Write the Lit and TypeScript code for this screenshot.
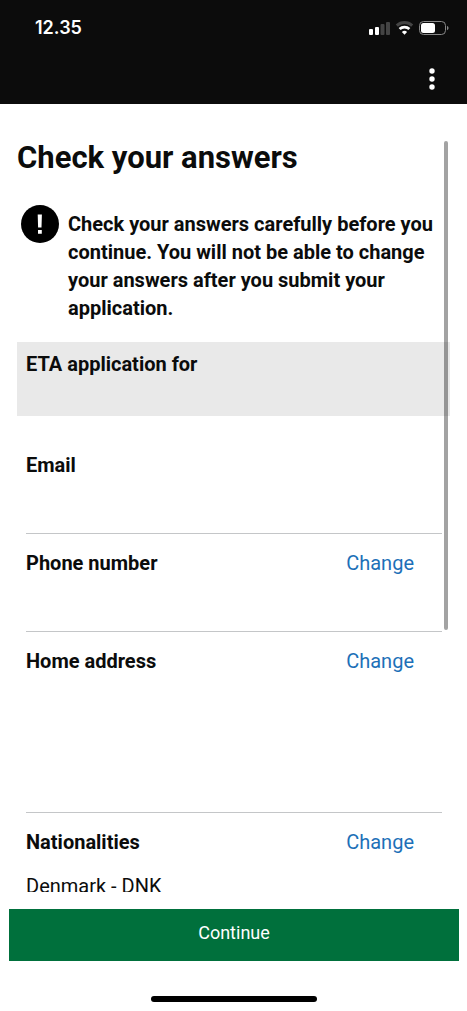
import { LitElement, html, css, svg, nothing } from "lit";
import { customElement, property } from "lit/decorators.js";

interface Answer {
  label: string;
  lines: string[];
  blank?: "line" | "block";
  change?: boolean;
}

const ANSWERS: Answer[] = [
  { label: "Email", lines: [], blank: "line" },
  { label: "Phone number", lines: [], blank: "line", change: true },
  { label: "Home address", lines: [], blank: "block", change: true },
  { label: "Nationalities", lines: ["Denmark - DNK"], change: true },
];

@customElement("status-bar")
export class StatusBar extends LitElement {
  static styles = css`
    :host {
      display: flex;
      align-items: center;
      justify-content: space-between;
      height: 56px;
      padding: 0 18px 0 35px;
      color: #fff;
      font: 600 18px/24px Inter, sans-serif;
    }
    .icons {
      display: block;
    }
  `;

  render() {
    return html`
      <time>12.35</time>
      <svg class="icons" width="80" height="16" viewBox="0 0 80 16" aria-hidden="true">
        <rect x="0" y="9" width="4" height="6" rx="1" fill="#fff" />
        <rect x="6" y="7" width="4" height="8" rx="1" fill="#fff" />
        <rect x="11.500" y="4" width="4" height="11" rx="1" fill="#444" />
        <rect x="17" y="2" width="4" height="13" rx="1" fill="#444" />
        ${svg`
          <path d="M27.8 5.6a11.2 11.2 0 0 1 15.4 0" fill="none" stroke="#444" stroke-width="3" />
          <path d="M30.6 9a7.2 7.2 0 0 1 9.800 0" fill="none" stroke="#fff" stroke-width="2.8" />
          <path d="M35.5 14.8 32.9 12.1a3.7 3.7 0 0 1 5.2 0z" fill="#fff" />
        `}
        <rect x="50.5" y="1.5" width="26" height="13" rx="4" fill="none" stroke="#888" />
        <rect x="52" y="3" width="14" height="10" rx="2.5" fill="#fff" />
        <path d="M78 6c2 .7 2 3.5 0 4.2z" fill="#888" />
      </svg>
    `;
  }
}

@customElement("answer-row")
export class AnswerRow extends LitElement {
  @property({ attribute: false }) answer!: Answer;

  static styles = css`
    :host {
      display: block;
      padding: 15px 28px 10px 0;
      border-bottom: 1px solid #c4c6c8;
    }
    .head {
      display: flex;
      justify-content: space-between;
      margin-bottom: 16px;
    }
    .label {
      margin: 0;
      font: inherit;
      font-weight: 700;
    }
    .link {
      color: #1d70b8;
      text-decoration: none;
    }
    .value {
      margin: 0;
      min-height: 28px;
    }
    .block {
      min-height: 111px;
    }
  `;

  render() {
    const { label, lines, blank, change } = this.answer;
    return html`
      <div class="head">
        <h2 class="label">${label}</h2>
        ${change ? html`<a class="link" href="#" aria-label="Change ${label}">Change</a>` : nothing}
      </div>
      <p class="value ${blank ?? ""}">${lines.join(", ")}</p>
    `;
  }
}

@customElement("app-root")
export class AppRoot extends LitElement {
  static styles = css`
    :host {
      display: flex;
      flex-direction: column;
      height: 100vh;
      background: #fff;
      color: #0b0c0c;
      font: 400 20px/28px Roboto, sans-serif;
    }
    .top {
      background: #0c0c0c;
    }
    .bar {
      display: flex;
      justify-content: flex-end;
      height: 48px;
      padding-right: 15px;
    }
    .more {
      width: 40px;
      height: 48px;
      padding: 0;
      border: 0;
      background: none;
    }
    .frame {
      position: relative;
      flex: 1;
      min-height: 0;
    }
    .scroll {
      box-sizing: border-box;
      height: 100%;
      padding: 34px 17px 0;
      overflow-y: auto;
      scrollbar-width: none;
    }
    .thumb {
      position: absolute;
      top: 37px;
      right: 19px;
      width: 4px;
      height: 62%;
      border-radius: 2px;
      background: rgba(0, 0, 0, 0.36);
    }
    .title {
      margin: 0 0 27px;
      font-size: 31px;
      line-height: 40px;
      font-weight: 700;
    }
    .notice {
      display: flex;
      gap: 9px;
      margin: 0 9px 20px 4px;
    }
    .mark {
      flex: none;
    }
    .warn {
      margin: 0;
      padding-top: 5px;
      font-weight: 700;
    }
    .panel {
      min-height: 56px;
      margin-bottom: 20px;
      padding: 8px 9px 10px;
      background: #e9e9e9;
    }
    .panel-title {
      margin: 0;
      font: inherit;
      font-weight: 700;
    }
    .rows {
      padding: 0 8px 0 9px;
    }
    .foot {
      padding: 17px 8px 9px 9px;
    }
    .continue {
      display: block;
      width: 100%;
      height: 52px;
      padding: 0 0 4px;
      border: 0;
      background: #00703c;
      color: #fff;
      font: inherit;
      font-size: 18px;
    }
    .home {
      width: 37%;
      height: 6px;
      margin: 35px auto 0;
      border-radius: 3px;
      background: #000;
    }
  `;

  render() {
    return html`
      <header class="top">
        <status-bar></status-bar>
        <div class="bar">
          <button class="more" aria-label="More options">
            <svg width="8" height="24" viewBox="0 0 8 24" fill="#fff" aria-hidden="true">
              <circle cx="4" cy="4" r="2.7" />
              <circle cx="4" cy="12" r="2.7" />
              <circle cx="4" cy="20" r="2.7" />
            </svg>
          </button>
        </div>
      </header>
      <main class="frame">
        <div class="scroll">
          <h1 class="title">Check your answers</h1>
          <div class="notice">
            <svg class="mark" width="38" height="38" viewBox="0 0 38 38" aria-hidden="true">
              <circle cx="19" cy="19" r="19" fill="#000" />
              <path d="M16.7 9.5h4.2l-.4 13h-3.4zM17 25h3.8v3.8H17z" fill="#fff" />
            </svg>
            <p class="warn">
              Check your answers carefully before you continue. You will not be able to change your
              answers after you submit your application.
            </p>
          </div>
          <section class="panel">
            <h2 class="panel-title">ETA application for</h2>
          </section>
          <div class="rows">
            ${ANSWERS.map((a) => html`<answer-row .answer=${a}></answer-row>`)}
          </div>
        </div>
        <div class="thumb"></div>
      </main>
      <footer class="foot">
        <button class="continue">Continue</button>
        <div class="home"></div>
      </footer>
    `;
  }
}
